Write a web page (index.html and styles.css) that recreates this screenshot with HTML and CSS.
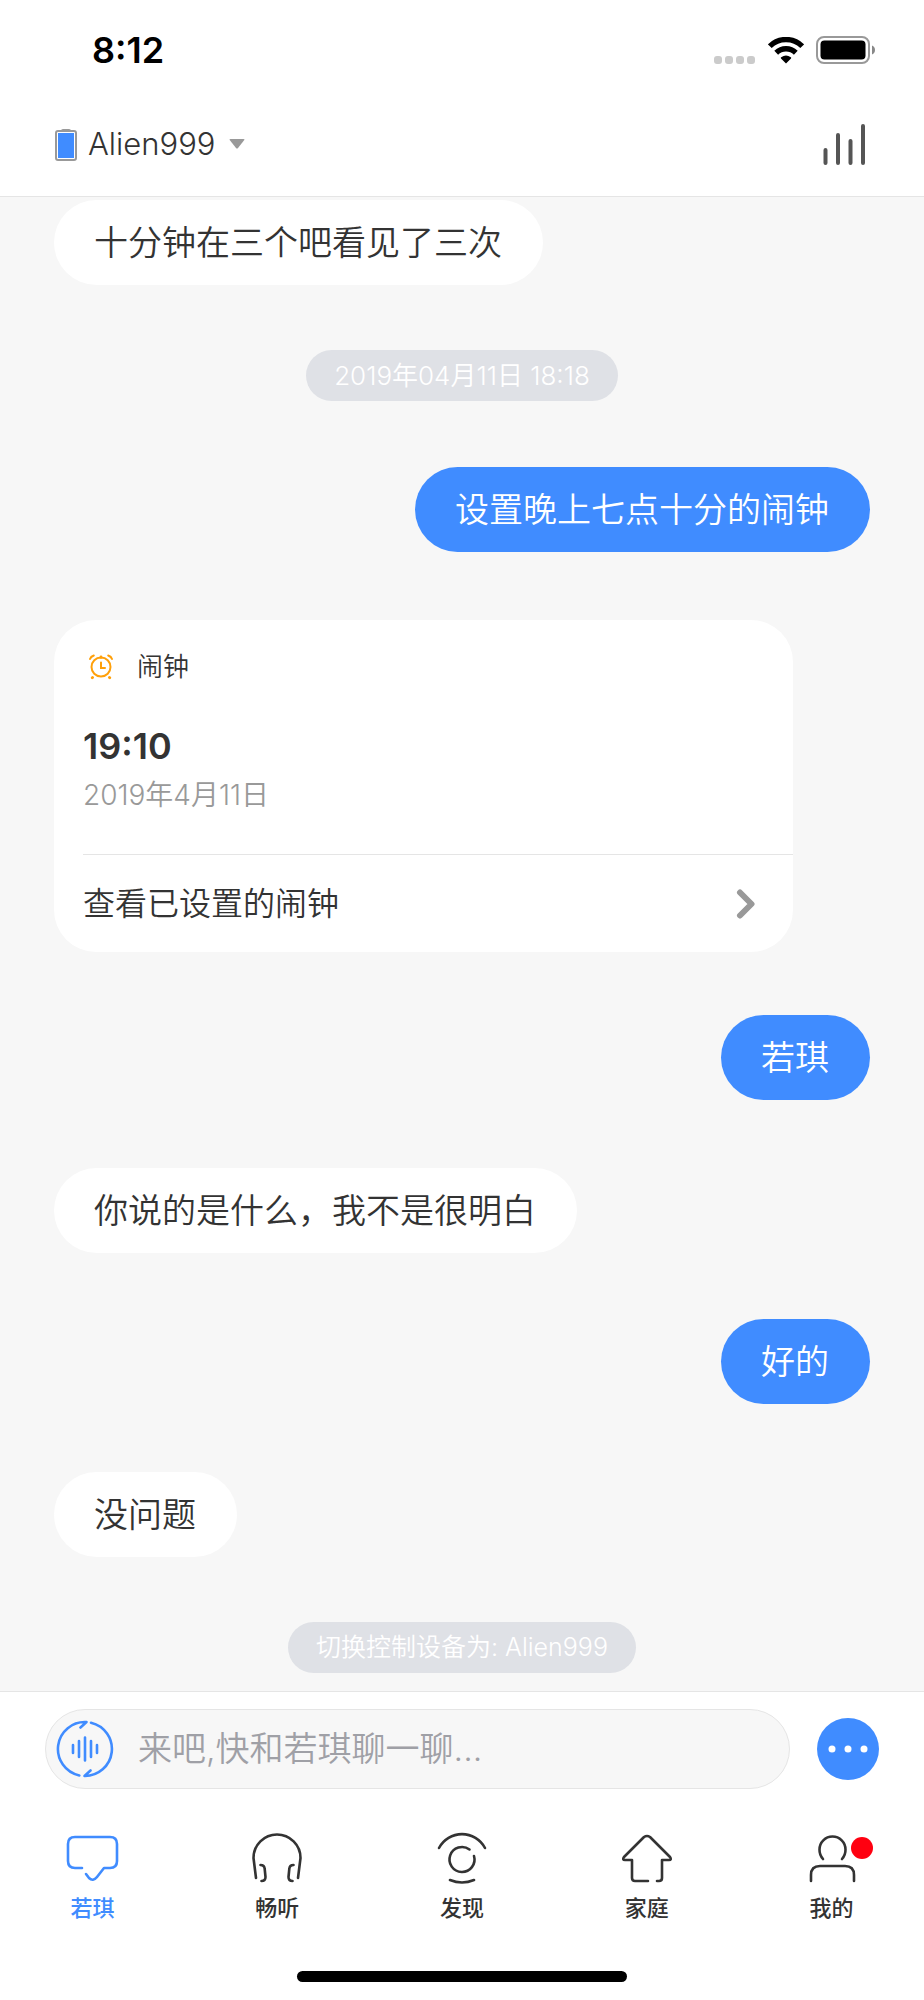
FILE: index.html
```
<!DOCTYPE html>
<html lang="zh-CN">
<head>
    <meta charset="UTF-8">
    <meta name="viewport" content="width=device-width, initial-scale=1.0">
    <title>若琪</title>
    <link rel="stylesheet" href="styles.css">
</head>
<body>
    <div class="app">
        <!-- Status bar -->
        <div class="status-bar">
            <span class="status-time">8:12</span>
            <div class="status-icons">
                <svg class="status-signal" width="42" height="8" viewBox="0 0 42 8" fill="#cbcbcb" aria-hidden="true">
                    <rect x="0" y="0" width="8" height="8" rx="3"/>
                    <rect x="11" y="0" width="8" height="8" rx="3"/>
                    <rect x="22" y="0" width="8" height="8" rx="3"/>
                    <rect x="33" y="0" width="8" height="8" rx="3"/>
                </svg>
                <svg width="36" height="27" viewBox="0 0 36 27" fill="none" stroke="#000" aria-hidden="true">
                    <path d="M1.8 9.2a23 23 0 0 1 32.4 0" stroke-width="5.4"/>
                    <path d="M8.2 15.8a14 14 0 0 1 19.6 0" stroke-width="5.4"/>
                    <path d="M18 26.4l-5-5q-.6-.7.2-1.200a8.500 8.500 0 0 1 9.600 0q.8.500.2 1.200z" fill="#000" stroke="none"/>
                </svg>
                <svg width="60" height="28" viewBox="0 0 60 28" aria-hidden="true">
                    <rect x="1" y="1" width="52" height="26" rx="7" fill="none" stroke="#999" stroke-width="2"/>
                    <rect x="4.500" y="4.500" width="45" height="19" rx="4"/>
                    <path d="M56 9.500c4 1.500 4 7.500 0 9z" fill="#888"/>
                </svg>
            </div>
        </div>

        <!-- Current device -->
        <header class="header">
            <label class="device">
                <svg width="24" height="33" viewBox="0 0 24 33" aria-hidden="true">
                    <path d="M7 2.500q0-1.500 2-1.500h6q2 0 2 1.500z" fill="#999"/>
                    <rect x="2" y="3" width="20" height="29" rx="2" fill="#fff" stroke="#999" stroke-width="2"/>
                    <rect x="4" y="5" width="16" height="25" fill="#408cff"/>
                </svg>
                <select class="device-select" aria-label="设备">
                    <option>Alien999</option>
                </select>
                <svg class="device-arrow" width="16" height="10" viewBox="0 0 16 10" fill="#999" aria-hidden="true">
                    <path d="M1.500 0h13q1.500 0 .8 1L9 9q-1 1-2 0L.7 1Q0 0 1.500 0z"/>
                </svg>
            </label>
            <button class="icon-btn" type="button" aria-label="正在播放">
                <svg width="46" height="44" viewBox="0 0 46 44" fill="none" stroke="#555" stroke-width="4" stroke-linecap="round" aria-hidden="true">
                    <path d="M3.500 28v13M16 13v28M28.500 19v22M41 4v37"/>
                </svg>
            </button>
        </header>

        <!-- Messages -->
        <main class="chat">
            <p class="bubble received first">十分钟在三个吧看见了三次</p>
            <p class="notice notice-time">2019年04月11日 18:18</p>
            <p class="bubble sent">设置晚上七点十分的闹钟</p>

            <section class="card">
                <div class="card-body">
                    <div class="card-head">
                        <svg width="24" height="26" viewBox="0 0 24 26" fill="none" stroke="#ffa00a" stroke-width="2" stroke-linecap="round" aria-hidden="true">
                            <circle cx="12" cy="13" r="9.500"/>
                            <path d="M12 8.500v5.500h4"/>
                            <path d="M1 5q.8-2.500 3.800-3.500M23 5q-.8-2.500-3.800-3.500"/>
                            <path d="M3.200 23.800l.4-.4M20.800 23.800l-.4-.4M12 3v.4" stroke-width="2.800"/>
                        </svg>
                        <h2 class="card-title">闹钟</h2>
                    </div>
                    <p class="card-time">19:10</p>
                    <p class="card-date">2019年4月11日</p>
                </div>
                <a class="card-link" href="#">
                    查看已设置的闹钟
                    <svg width="20" height="30" viewBox="0 0 20 30" fill="none" stroke="#999" stroke-width="6" stroke-linecap="round" stroke-linejoin="round" aria-hidden="true">
                        <path d="M4 3.500L15.500 15 4 26.500"/>
                    </svg>
                </a>
            </section>

            <p class="bubble sent">若琪</p>
            <p class="bubble received">你说的是什么，我不是很明白</p>
            <p class="bubble sent">好的</p>
            <p class="bubble received">没问题</p>
            <p class="notice">切换控制设备为: Alien999</p>
        </main>

        <footer class="footer">
            <!-- Input -->
            <form class="composer">
                <div class="input-box">
                    <button class="icon-btn" type="button" aria-label="语音">
                        <svg width="58" height="58" viewBox="0 0 58 58" fill="none" stroke="#408cff" stroke-width="2.600" stroke-linecap="round" stroke-linejoin="round" aria-hidden="true">
                            <path d="M23.300 55.400A27 27 0 0 1 30.500 2.040L24.500 7.500"/>
                            <path d="M35 2.700A27 27 0 0 1 28.500 56l6-5.500"/>
                            <path d="M17 25v8M23 21v16M29 17.500v23M35 21v16M41 25v8"/>
                        </svg>
                    </button>
                    <input class="message-input" type="text" placeholder="来吧,快和若琪聊一聊..." aria-label="消息">
                </div>
                <button class="more-btn" type="button" aria-label="更多">
                    <svg width="42" height="8" viewBox="0 0 42 8" fill="#fff" aria-hidden="true">
                        <circle cx="5" cy="4" r="3.500"/>
                        <circle cx="21" cy="4" r="3.500"/>
                        <circle cx="37" cy="4" r="3.500"/>
                    </svg>
                </button>
            </form>

            <!-- Tabs -->
            <nav class="tabs">
                <a class="tab active" href="#">
                    <svg class="tab-icon" viewBox="0 0 56 56" aria-hidden="true">
                        <path d="M18 38h-7q-7 0-7-7V14q0-7 7-7h35q7 0 7 7v17q0 7-7 7h-6l-7 9q-4 5-8 1l-3-4"/>
                    </svg>
                    若琪
                </a>
                <a class="tab" href="#">
                    <svg class="tab-icon" viewBox="0 0 56 56" aria-hidden="true">
                        <path d="M7 48L4.500 28A23.500 23.500 0 1 1 51.500 28L49 48"/>
                        <path d="M11.500 35q4 0 4.200 4l.8 8q0 4-4 4M44.500 35q-4 0-4.200 4l-.8 8q0 4 4 4"/>
                    </svg>
                    畅听
                </a>
                <a class="tab" href="#">
                    <svg class="tab-icon" viewBox="0 0 56 56" aria-hidden="true">
                        <path d="M5 18a26 26 0 0 1 46 0M16 50q12 5 24 0"/>
                        <path d="M35.500 19.500A12.500 12.500 0 1 0 40 26"/>
                    </svg>
                    发现
                </a>
                <a class="tab" href="#">
                    <svg class="tab-icon" viewBox="0 0 56 56" aria-hidden="true">
                        <path d="M29 51H16q-3 0-3-3V30H6q-3 0-1-3L25 7q3-2 6 0l20 20q2 3-1 3h-7v18q0 3-3 3h-2"/>
                    </svg>
                    家庭
                </a>
                <a class="tab" href="#">
                    <span class="tab-badge-box">
                        <svg class="tab-icon" viewBox="0 0 56 56" aria-hidden="true">
                            <path d="M19 29A14 14 0 0 1 15.500 19.500a13 13 0 0 1 26 0A14 14 0 0 1 38 29"/>
                            <path d="M7 51v-6q0-9 9-9h25q9 0 9 9v6"/>
                        </svg>
                        <span class="tab-badge"></span>
                    </span>
                    我的
                </a>
            </nav>
            <div class="home-indicator"></div>
        </footer>
    </div>
</body>
</html>
```

FILE: styles.css
```
:root {
    --primary: #408cff;
    --text: #333;
    --muted: #999;
    --line: #e5e5e5;
    --bg: #f7f7f7;
    --notice: #dfe1e6;
}

* {
    margin: 0;
    padding: 0;
    box-sizing: border-box;
}

body {
    font-family: Inter, "Noto Sans CJK SC", sans-serif;
    font-weight: 350;
    color: var(--text);
    background-color: white;
}

button,
input,
select {
    font: inherit;
    color: inherit;
    border: none;
    background: none;
}

a {
    color: inherit;
    text-decoration: none;
}

svg {
    display: block;
    flex-shrink: 0;
}

.app {
    min-height: 100vh;
    display: flex;
    flex-direction: column;
}

/* Status bar */
.status-bar {
    display: flex;
    justify-content: space-between;
    align-items: center;
    height: 100px;
    padding: 0 48px 0 92px;
    color: black;
}

.status-time {
    font-size: 36px;
    font-weight: 600;
}

.status-icons {
    display: flex;
    align-items: center;
    gap: 12px;
}

.status-signal {
    align-self: flex-end;
}

/* Header */
.header {
    display: flex;
    justify-content: space-between;
    align-items: center;
    height: 97px;
    padding: 0 56px 8px 54px;
    border-bottom: 1px solid var(--line);
}

.device {
    display: flex;
    align-items: center;
    gap: 10px;
}

.device-select {
    appearance: none;
    font-size: 31px;
    line-height: 40px;
}

.device-arrow {
    margin-left: 3px;
}

.icon-btn {
    cursor: pointer;
}

/* Chat */
.chat {
    flex: 1;
    display: flex;
    flex-direction: column;
    padding: 3px 54px 18px;
    background-color: var(--bg);
}

.bubble {
    max-width: 740px;
    padding: 18px 41px 17px 40px;
    font-size: 34px;
    line-height: 50px;
    border-radius: 43px;
}

.received {
    align-self: flex-start;
    margin-top: 68px;
    background-color: white;
}

.sent {
    align-self: flex-end;
    margin-top: 66px;
    color: white;
    background-color: var(--primary);
}

.bubble.first {
    margin-top: 0;
}

.card + .sent {
    margin-top: 63px;
}

.notice {
    align-self: center;
    margin-top: 65px;
    padding: 8px 28px;
    font-size: 25px;
    line-height: 35px;
    color: white;
    background-color: var(--notice);
    border-radius: 26px;
}

.notice-time {
    font-size: 26px;
}

/* Alarm card */
.card {
    width: 100%;
    max-width: 739px;
    margin-top: 68px;
    padding-left: 29px;
    background-color: white;
    border-radius: 42px;
}

.card-body {
    padding: 28px 0 39px;
    border-bottom: 1px solid var(--line);
}

.card-head {
    display: flex;
    align-items: center;
    gap: 24px;
    padding-left: 6px;
}

.card-title {
    font-size: 26px;
    font-weight: 350;
    line-height: 38px;
}

.card-time {
    margin-top: 36px;
    font-size: 36px;
    font-weight: 600;
    line-height: 48px;
}

.card-date {
    margin-top: 5px;
    font-size: 28px;
    line-height: 40px;
    color: var(--muted);
}

.card-link {
    display: flex;
    justify-content: space-between;
    align-items: center;
    padding: 25px 37px 24px 0;
    font-size: 32px;
    line-height: 48px;
}

/* Footer */
.footer {
    border-top: 1px solid var(--line);
}

.composer {
    display: flex;
    align-items: center;
    gap: 27px;
    padding: 17px 45px 0;
}

.input-box {
    flex: 1;
    display: flex;
    align-items: center;
    gap: 24px;
    height: 80px;
    padding: 0 24px 0 10px;
    border: 1px solid var(--line);
    border-radius: 40px;
    background-color: var(--bg);
}

.message-input {
    flex: 1;
    min-width: 0;
    font-size: 34px;
    line-height: 50px;
    outline: none;
}

.message-input::placeholder {
    color: #9fa0a6;
    opacity: 1;
}

.more-btn {
    display: flex;
    align-items: center;
    justify-content: center;
    width: 62px;
    height: 62px;
    border-radius: 50%;
    background-color: var(--primary);
    cursor: pointer;
}

/* Tabs */
.tabs {
    display: grid;
    grid-template-columns: repeat(5, 1fr);
    margin-top: 41px;
}

.tab {
    display: flex;
    flex-direction: column;
    align-items: center;
    gap: 6px;
    font-size: 22px;
    font-weight: 500;
    line-height: 32px;
}

.tab.active {
    color: var(--primary);
}

.tab-icon {
    width: 56px;
    height: 56px;
    fill: none;
    stroke: currentColor;
    stroke-width: 2.6;
    stroke-linecap: round;
    stroke-linejoin: round;
}

.tab-badge-box {
    position: relative;
}

.tab-badge {
    position: absolute;
    top: 7px;
    right: -13px;
    width: 22px;
    height: 22px;
    border-radius: 50%;
    background-color: #ff0010;
}

.home-indicator {
    width: 330px;
    max-width: 60%;
    height: 11px;
    margin: 47px auto 18px;
    border-radius: 6px;
    background-color: black;
}
```
